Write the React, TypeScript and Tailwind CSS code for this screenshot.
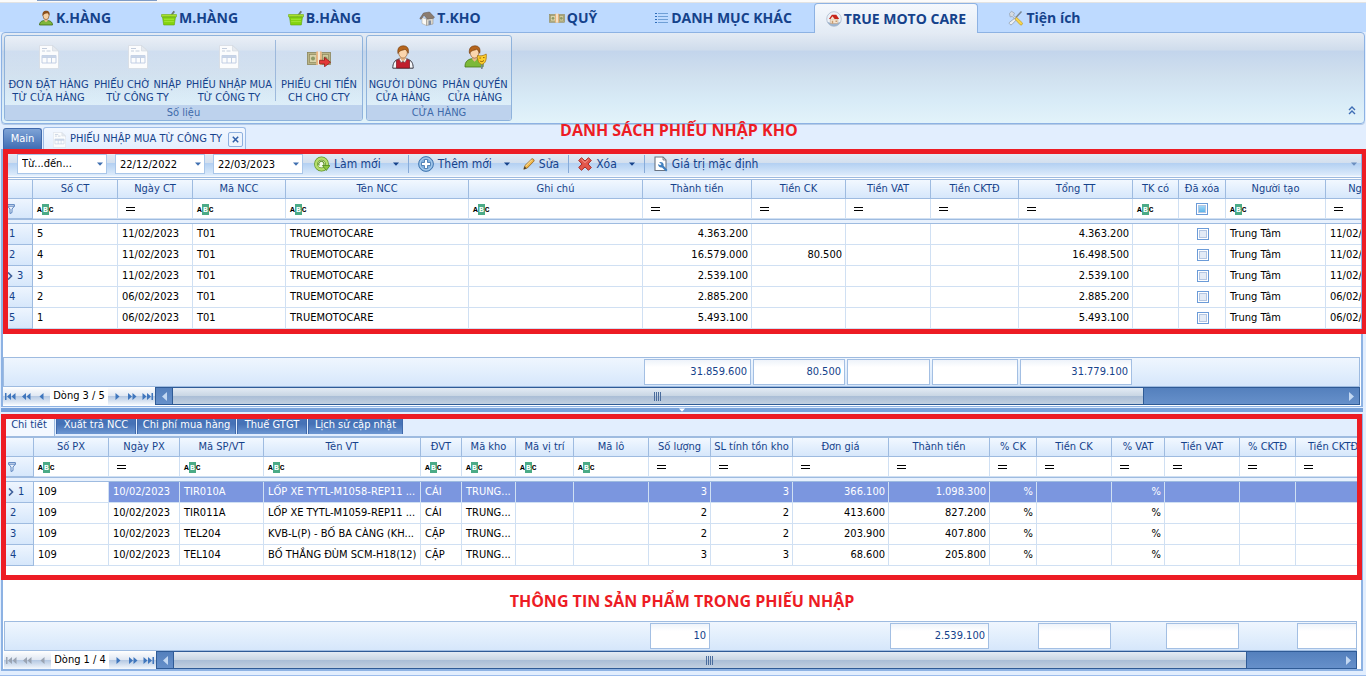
import type { ReactNode } from "react";

/* ---------- icons ---------- */

function PersonIcon({ className, shirt }: { className: string; shirt: string }) {
  return (
    <svg viewBox="0 0 16 16" className={className} aria-hidden="true">
      <path d="M1.500 15c0-3.200 2.400-4.600 6.500-4.600s6.500 1.400 6.500 4.600z" fill={shirt} stroke="#3f6b12" strokeWidth=".8" />
      <path d="M6.300 8.500h3.400v2.200L8 12.300l-1.700-1.600z" fill="#e9b98a" />
      <ellipse cx="8" cy="5.600" rx="3" ry="4" fill="#f6d0a4" stroke="#7a4a1c" strokeWidth=".6" />
      <path d="M4.600 6C4 2.400 5.600.8 8.200.8s4 1.600 3.300 5c-.5-1.400-1.300-2.300-2.300-2.500C7.800 3.900 5.400 3.700 4.600 6z" fill="#8a4f1d" />
    </svg>
  );
}

function BasketIcon() {
  return (
    <svg viewBox="0 0 16 16" className="size-4" aria-hidden="true">
      <path d="M9 6.500L13 1.200M11 4.500l2.500-3" stroke="#6c7a70" strokeWidth="1.200" fill="none" />
      <path d="M.5 4.500h15v2.300H.5z" fill="#a9e02c" stroke="#6fae14" strokeWidth=".6" />
      <path d="M1.500 7h13l-1.200 8H2.700z" fill="#84d30f" stroke="#62a50c" strokeWidth=".6" />
      <path d="M3 9.300h10M3.200 11.600h9.600" stroke="#a6e63a" strokeWidth=".9" />
    </svg>
  );
}

function HouseIcon() {
  return (
    <svg viewBox="0 0 16 16" className="size-4" aria-hidden="true">
      <path d="M3 7.500v6l4.500 2V9z" fill="#fbfaf6" stroke="#a39c8f" strokeWidth=".5" />
      <path d="M7.500 9l6.500-1v6l-6.500 1.500z" fill="#ddd8cd" stroke="#8c8578" strokeWidth=".5" />
      <path d="M.8 8.500L4.500 3l6-1 5 5.300-1 .9-6.200.9L5 5.200 2 9.300z" fill="#8b7c70" stroke="#5d5148" strokeWidth=".5" />
      <path d="M9.500 10.500H12v4.300l-2.500.5z" fill="#7f8ca0" />
    </svg>
  );
}

function MoneyIcon({ className, arrow }: { className: string; arrow?: boolean }) {
  return (
    <svg viewBox="0 0 24 18" className={className} aria-hidden="true">
      <rect x=".5" y="3.500" width="23" height="12" fill="#b9b487" stroke="#8b865c" strokeWidth=".8" />
      <rect x="2.500" y="5.500" width="7" height="8" fill="#d8d3ab" stroke="#8f895d" strokeWidth=".7" />
      <rect x="15.500" y="5.500" width="6" height="8" fill="#cfca9d" stroke="#8f895d" strokeWidth=".7" />
      <circle cx="6" cy="9.500" r="2" fill="#8e9a68" />
      <circle cx="18.500" cy="9.500" r="2" fill="#8e9a68" />
      <path d="M9.500 2.500h5v13.500h-5z" fill="#f4ead8" />
      <path d="M9.500 2.500h1.200V16H9.500zM13.300 2.500h1.200V16h-1.200z" fill="#e9a15f" />
      {arrow && <path d="M12.500 11.300h5v-3l6 5-6 4.500v-3h-5z" fill="#e33838" stroke="#8f1414" strokeWidth=".7" />}
    </svg>
  );
}

function ListIcon() {
  return (
    <svg viewBox="0 0 14 12" className="h-3 w-3.5" aria-hidden="true">
      <path d="M0 1.500h2M0 4.500h2M0 7.500h2M0 10.500h2" stroke="#2f6cb8" />
      <path d="M3 1.500h10M3 4.500h10M3 7.500h10M3 10.500h10" stroke="#6f9fd6" />
    </svg>
  );
}

function CareIcon() {
  return (
    <svg viewBox="0 0 16 16" className="size-4" aria-hidden="true">
      <circle cx="8" cy="8" r="7.300" fill="#edf2f8" stroke="#b3c1d2" strokeWidth=".9" />
      <path d="M1.300 10.500c2.500 2 10.900 2 13.400 0-1 3-3.500 4.700-6.700 4.700s-5.700-1.700-6.700-4.700z" fill="#9db4ce" />
      <path d="M4.300 8h7.600v4.500H4.300z" fill="#f3e3cf" stroke="#b58d6a" strokeWidth=".4" />
      <path d="M2.900 8l3-4.300h4.400L13.200 8z" fill="#c62419" />
      <path d="M4.300 8.300l2.200-3 2.300 3z" fill="#f3e3cf" />
      <path d="M9.500 9.500H11V11H9.500zM5.800 9.700h1.400v2.800H5.800z" fill="#c79b6f" />
    </svg>
  );
}

function ToolsIcon() {
  return (
    <svg viewBox="0 0 16 16" className="size-4" aria-hidden="true">
      <path d="M13.500 1.500L6 9.500" stroke="#7a8794" strokeWidth="1.500" />
      <path d="M7 8l1.600 1.600-4.800 5c-1 .9-3.400-1-2.400-2.200z" fill="#eef1f5" stroke="#8693a3" strokeWidth=".7" />
      <path d="M1.500 3.500l2-2.300 3 2-1 2 3 3-1 1.300-3.300-3-2 .4z" fill="#d4dae1" stroke="#8b95a1" strokeWidth=".6" />
      <path d="M8.500 7.300l5.800 5.500c.9 1.200-.9 3-2.100 2L7 9.200z" fill="#f7d54c" stroke="#b8901c" strokeWidth=".6" />
    </svg>
  );
}

function DocIcon({ className }: { className: string }) {
  return (
    <svg viewBox="0 0 20 24" className={className} aria-hidden="true">
      <path d="M.5.500h13l6 5.500v17.500H.5z" fill="#fbfcfd" stroke="#d5dae2" strokeWidth=".8" />
      <path d="M13.500.500V6h6z" fill="#e6eaf0" stroke="#d0d6df" strokeWidth=".6" />
      <path d="M3 3.500h5M3 6h3M7.500 6h4" stroke="#c3cddd" strokeWidth="1.200" />
      <path d="M3 10.500h14V18H3zM3 12.500h14M8 10.500V18M12.500 10.500V18" fill="none" stroke="#bccbe2" strokeWidth=".9" />
      <path d="M3 10.500h14v2H3z" fill="#c9d5e8" />
    </svg>
  );
}

function UserRedIcon() {
  return (
    <svg viewBox="0 0 22 24" className="h-6 w-[22px]" aria-hidden="true">
      <path d="M.8 23.200c0-5 1.700-8 6-9.200h8.400c4.300 1.200 6 4.200 6 9.200z" fill="#f5f6f8" stroke="#3b3b45" strokeWidth="1" />
      <path d="M4.500 23v-7.500l4-1.500 2.500 3.500 2.500-3.500 4 1.500V23z" fill="#c01f2e" stroke="#7c0f1a" strokeWidth=".7" />
      <path d="M7 13.500l1.500-.5 2.500 3.500 2.500-3.500 1.500.5-2 4-2-1.500-2 1.500z" fill="#fff" stroke="#555" strokeWidth=".5" />
      <path d="M8.500 11.500h5v2.500L11 16.500 8.500 14z" fill="#eab98b" />
      <ellipse cx="11" cy="7.800" rx="4.300" ry="5.300" fill="#fbd5ac" stroke="#8a4f1d" strokeWidth=".6" />
      <path d="M6 8.500C5 3.500 7.300.8 11.300.8c4 0 6 2.800 4.900 7.500-.7-2-1.700-3.300-3.200-4C11 5.500 7.300 5 6 8.500z" fill="#b5651d" stroke="#6e3809" strokeWidth=".6" />
    </svg>
  );
}

function UserMaskIcon() {
  return (
    <svg viewBox="0 0 23 24" className="h-6 w-[23px]" aria-hidden="true">
      <path d="M1 22c-.3-5.500 3-8.500 9.500-8.500S20 16.500 19 22z" fill="#7cb938" stroke="#47761a" strokeWidth=".8" />
      <path d="M8.300 11.500h4.500v3l-2.200 2.200-2.300-2.200z" fill="#eab98b" />
      <ellipse cx="10.500" cy="7.800" rx="4.200" ry="5.300" fill="#fbd5ac" stroke="#8a4f1d" strokeWidth=".6" />
      <path d="M5.500 8.500C4.500 3.500 7 .8 11 .8c4 0 5.800 2.800 4.700 7.500-.7-2-1.500-3.300-3-4C10.500 5.500 7 5 5.500 8.500z" fill="#b5651d" stroke="#6e3809" strokeWidth=".6" />
      <path d="M13.500 10.500c3 .8 6 .3 8.700-1.500.5 5.500-.7 9.500-4.400 10.500-3-1-4.300-4.200-4.300-9z" fill="#ffd02e" stroke="#a9760c" strokeWidth=".8" />
      <path d="M15.300 13h1.800M19 12.600h1.600M15.800 15.800c1.300 1.300 2.800 1.100 4.200-.4" stroke="#8a5a06" strokeWidth=".9" fill="none" />
      <path d="M17.800 19.500V24" stroke="#7b8794" strokeWidth="1.600" />
    </svg>
  );
}

function RefreshIcon() {
  return (
    <svg viewBox="0 0 16 16" className="size-4" aria-hidden="true">
      <circle cx="7.500" cy="8" r="5.500" fill="#f4faea" stroke="#5f9427" strokeWidth="3.800" />
      <circle cx="7.500" cy="8" r="5.500" fill="none" stroke="#b5dd6c" strokeWidth="2.400" />
      <path d="M5.300 9.500A2.600 2.600 0 1 1 9 10" fill="none" stroke="#5f9427" strokeWidth="1.100" />
      <path d="M8.500 9.500H16l-3.700 5z" fill="#8cc63f" stroke="#4f8a1e" strokeWidth=".8" />
    </svg>
  );
}

function AddIcon() {
  return (
    <svg viewBox="0 0 16 16" className="size-4" aria-hidden="true">
      <circle cx="8" cy="8" r="7.400" fill="#7fafdd" stroke="#4377b0" strokeWidth="1" />
      <circle cx="8" cy="8" r="6" fill="none" stroke="#b9d5f0" strokeWidth=".8" />
      <path d="M6.500 3.500h3v3h3v3h-3v3h-3v-3h-3v-3h3z" fill="#fff" stroke="#3a6ea8" strokeWidth=".8" />
    </svg>
  );
}

function PencilIcon() {
  return (
    <svg viewBox="0 0 12 12" className="size-3" aria-hidden="true">
      <path d="M.8 11.200L2 7.500 8.800.9c1-.7 2.900 1.100 2.200 2.200L4.300 10z" fill="#f2b84b" stroke="#8a5a16" strokeWidth=".8" />
      <path d="M2.500 8.200l6.300-6.400" stroke="#fde6a8" strokeWidth="1" />
      <path d="M.8 11.200l.9-2.600 1.700 1.700z" fill="#333" />
    </svg>
  );
}

function DeleteIcon() {
  return (
    <svg viewBox="0 0 14 14" className="size-3.5" aria-hidden="true">
      <path d="M3.500.7L7 4 10.500.7l2.800 2.800L10 7l3.300 3.500-2.800 2.800L7 10l-3.500 3.300L.7 10.500 4 7 .7 3.500z" fill="#e2574c" stroke="#a32018" strokeWidth=".9" />
      <path d="M3.500 2.300L7 5.600l3.500-3.300" stroke="#f5a49c" strokeWidth=".9" fill="none" />
    </svg>
  );
}

function DefaultsIcon() {
  return (
    <svg viewBox="0 0 14 16" className="h-4 w-3.5" aria-hidden="true">
      <path d="M1 1h8l3 3v10.500H1z" fill="#fff" stroke="#6a7482" strokeWidth="1.100" />
      <path d="M9 1v3h3z" fill="#d5dae2" stroke="#6a7482" strokeWidth=".8" />
      <path d="M5 6.500a3 3 0 0 1 4.600 3.300L13.500 14l-1.400 1.500L8 11.400A3 3 0 0 1 4.200 8l2 1.300 1.400-1.200z" fill="#3f7fbf" />
    </svg>
  );
}

function DownArrow({ className }: { className: string }) {
  return (
    <svg viewBox="0 0 6 4" className={className} aria-hidden="true">
      <path d="M0 .5h6L3 3.700z" fill="currentColor" />
    </svg>
  );
}

function FunnelIcon() {
  return (
    <svg viewBox="0 0 8 10" className="h-2.5 w-2" aria-hidden="true">
      <path d="M.6.600h6.800v1.600L5 5v3.600L3 9.500V5L.6 2.200zM.6 2.200h6.800" fill="#eaf2fc" stroke="#4d78b8" strokeWidth=".9" />
    </svg>
  );
}

type NavKind = "first" | "prevPage" | "prev" | "next" | "nextPage" | "last";

const navPaths: Record<NavKind, string> = {
  first: "M0 1h1.500v7H0zM6 1v7L2 4.500zM10.500 1v7l-4-3.500z",
  prevPage: "M5 1v7L1 4.500zM9.500 1v7l-4-3.500z",
  prev: "M7.500 1v7l-4-3.500z",
  next: "M4.500 1v7l4-3.500z",
  nextPage: "M2 1v7l4-3.500zM6.500 1v7l4-3.500z",
  last: "M.5 1v7l4-3.500zM5 1v7l4-3.500zM9.500 1H11v7H9.500z",
};

function NavIcon({ kind }: { kind: NavKind }) {
  return (
    <svg viewBox="0 0 11 9" className="h-[9px] w-[11px]" aria-hidden="true">
      <path d={navPaths[kind]} fill="currentColor" />
    </svg>
  );
}

/* ---------- ribbon ---------- */

type Tab = { label: string; width: string; icon: ReactNode; active?: boolean };

const tabs: Tab[] = [
  { label: "K.HÀNG", width: "w-[125px]", icon: <PersonIcon className="size-4" shirt="#7fb63a" /> },
  { label: "M.HÀNG", width: "w-[125px]", icon: <BasketIcon /> },
  { label: "B.HÀNG", width: "w-[125px]", icon: <BasketIcon /> },
  { label: "T.KHO", width: "w-[126px]", icon: <HouseIcon /> },
  { label: "QUỸ", width: "w-[120px]", icon: <MoneyIcon className="h-3 w-4" /> },
  { label: "DANH MỤC KHÁC", width: "w-[181px]", icon: <ListIcon /> },
  { label: "TRUE MOTO CARE", width: "w-[164px]", icon: <CareIcon />, active: true },
  { label: "Tiện ích", width: "w-[133px]", icon: <ToolsIcon /> },
];

function RibbonTabs() {
  return (
    <nav className="flex h-[29px] items-stretch bg-[#bedaff] pl-3">
      {tabs.map((t) => (
        <button
          key={t.label}
          type="button"
          className={`flex ${t.width} shrink-0 items-center justify-center gap-0.5 whitespace-nowrap font-['Open_Sans',sans-serif] text-sm font-bold text-[#15428b] ${
            t.active ? "z-10 -mb-px rounded-t border border-b-0 border-[#8db2e3] bg-gradient-to-b from-[#f4f8fd] to-[#e3ebf5]" : ""
          }`}
        >
          {t.icon}
          {t.label}
        </button>
      ))}
    </nav>
  );
}

function RibbonButton({ lines, width, children }: { lines: [string, string]; width: string; children: ReactNode }) {
  return (
    <button type="button" className={`flex ${width} flex-col items-center pt-[9px] text-center`}>
      <span className="flex h-[33px] items-start justify-center">{children}</span>
      <span className="whitespace-nowrap leading-[13px] text-[#15428b]">
        {lines[0]}
        <br />
        {lines[1]}
      </span>
    </button>
  );
}

function RibbonGroup({ title, children }: { title: string; children: ReactNode }) {
  return (
    <div className="flex flex-col overflow-hidden rounded-[3px] border border-[#8fb3dc] bg-gradient-to-b from-white/30 via-white/5 to-white/10">
      <div className="flex flex-1">{children}</div>
      <div className="h-[15px] bg-[#bdd2ed] text-center leading-4 text-[#3e6aaa]">{title}</div>
    </div>
  );
}

function Ribbon() {
  return (
    <div className="flex h-[92px] gap-[3px] rounded-[4px] border border-[#8db2e3] bg-[linear-gradient(#e4ebf4_0%,#cfdcec_19%,#c3d5ec_20%,#cfdfee_45%,#d8ebf7_75%,#e2f3fa_100%)] p-[2px] shadow-[0_1px_0_#b5cbe6]">
      <RibbonGroup title="Số liệu">
        <RibbonButton lines={["ĐƠN ĐẶT HÀNG", "TỪ CỬA HÀNG"]} width="w-[87px]">
          <DocIcon className="h-6 w-5" />
        </RibbonButton>
        <RibbonButton lines={["PHIẾU CHỜ NHẬP", "TỪ CÔNG TY"]} width="w-[91px]">
          <DocIcon className="h-6 w-5" />
        </RibbonButton>
        <RibbonButton lines={["PHIẾU NHẬP MUA", "TỪ CÔNG TY"]} width="w-[92px]">
          <DocIcon className="h-6 w-5" />
        </RibbonButton>
        <span className="my-1 w-px bg-[#9db9dc]" />
        <RibbonButton lines={["PHIẾU CHI TIỀN", "CH CHO CTY"]} width="w-[86px]">
          <MoneyIcon className="mt-1 h-[18px] w-6" arrow />
        </RibbonButton>
      </RibbonGroup>
      <RibbonGroup title="CỬA HÀNG">
        <RibbonButton lines={["NGƯỜI DÙNG", "CỬA HÀNG"]} width="w-[72px]">
          <UserRedIcon />
        </RibbonButton>
        <RibbonButton lines={["PHÂN QUYỀN", "CỬA HÀNG"]} width="w-[72px]">
          <UserMaskIcon />
        </RibbonButton>
      </RibbonGroup>
      <button type="button" aria-label="Thu gọn" className="mb-1.5 ml-auto mr-1.5 self-end text-[#3e6db5]">
        <svg viewBox="0 0 8 9" className="h-[9px] w-2" aria-hidden="true">
          <path d="M1 4l3-3 3 3M1 8l3-3 3 3" fill="none" stroke="currentColor" strokeWidth="1.400" />
        </svg>
      </button>
    </div>
  );
}

function DocumentTabs() {
  return (
    <div className="flex h-[25px] items-end gap-px pl-[3px]">
      <button type="button" className="h-[21px] w-[39px] rounded-t-[3px] border border-b-0 border-[#3f69ac] bg-gradient-to-b from-[#7ea3d6] to-[#3f6cb3] text-white">
        Main
      </button>
      <div className="flex h-[22px] items-center rounded-t-[3px] border border-b-0 border-[#9dbce6] bg-gradient-to-b from-[#f3f8ff] to-[#e2eefe] pl-[9px] pr-0.5 pt-0.5 text-[#15428b]">
        <DocIcon className="h-4 w-[13px]" />
        <button type="button" className="ml-1 mr-1.5 whitespace-nowrap">
          PHIẾU NHẬP MUA TỪ CÔNG TY
        </button>
        <button type="button" aria-label="Đóng" className="flex size-[15px] items-center justify-center rounded-[2px] border border-[#8fb0de] bg-[#edf4fd]">
          <svg viewBox="0 0 7 7" className="size-[7px]" aria-hidden="true">
            <path d="M.8.800l5.400 5.400M6.200.8L.8 6.200" stroke="#2f5ea8" strokeWidth="1.500" />
          </svg>
        </button>
      </div>
    </div>
  );
}

/* ---------- toolbar ---------- */

const fieldBox = "h-5 w-[90px] border border-[#a9c6e9] bg-white pl-1 text-[11px] text-black outline-none";

function DateField({ label, value }: { label: string; value: string }) {
  return (
    <div className="relative flex">
      <input type="text" aria-label={label} defaultValue={value} className={fieldBox} />
      <button type="button" aria-label={`Chọn ${label}`} className="absolute inset-y-0 right-1 text-[#3f6fb0]">
        <DownArrow className="h-1 w-1.5" />
      </button>
    </div>
  );
}

function ToolButton({ icon, label, menu }: { icon: ReactNode; label: string; menu?: boolean }) {
  return (
    <button type="button" className="flex items-center gap-1 whitespace-nowrap text-xs text-[#15428b]">
      {icon}
      {label}
      {menu && <DownArrow className="ml-2 h-1 w-1.5" />}
    </button>
  );
}

function Toolbar() {
  const rule = <span className="h-[18px] w-px bg-[#86aad8]" />;
  return (
    <div className="flex h-[29px] items-center border-b border-[#9ebbe0] bg-[linear-gradient(#e9f0f8_0%,#d3dfee_50%,#b3d0f2_51%,#dcebfb_94%,#f5f9fe_96%)] pl-3.5 pt-0.5">
      <div className="flex gap-2">
        <div className="relative flex">
          <select aria-label="Khoảng thời gian" className={`${fieldBox} appearance-none`}>
            <option>Từ...đến...</option>
          </select>
          <DownArrow className="pointer-events-none absolute right-1 top-2 h-1 w-1.5 text-[#3f6fb0]" />
        </div>
        <DateField label="Từ ngày" value="22/12/2022" />
        <DateField label="Đến ngày" value="22/03/2023" />
      </div>
      <div className="ml-[11px] flex items-center gap-[9px]">
        <ToolButton icon={<RefreshIcon />} label="Làm mới" menu />
        {rule}
        <ToolButton icon={<AddIcon />} label="Thêm mới" menu />
        <span className="ml-1 flex">
          <ToolButton icon={<PencilIcon />} label="Sửa" />
        </span>
        {rule}
        <ToolButton icon={<DeleteIcon />} label="Xóa" menu />
        {rule}
        <ToolButton icon={<DefaultsIcon />} label="Giá trị mặc định" />
      </div>
      <DownArrow className="ml-auto mr-1 h-1 w-1.5 text-[#6b8fc0]" />
    </div>
  );
}

/* ---------- data grid ---------- */

type Column = {
  name: string;
  width: number;
  filter: "abc" | "eq" | "check";
  align?: "right" | "check";
  sum?: string;
};

const receiptColumns: Column[] = [
  { name: "Số CT", width: 85, filter: "abc" },
  { name: "Ngày CT", width: 75, filter: "eq" },
  { name: "Mã NCC", width: 93, filter: "abc" },
  { name: "Tên NCC", width: 183, filter: "abc" },
  { name: "Ghi chú", width: 174, filter: "abc" },
  { name: "Thành tiền", width: 109, filter: "eq", align: "right", sum: "31.859.600" },
  { name: "Tiền CK", width: 94, filter: "eq", align: "right", sum: "80.500" },
  { name: "Tiền VAT", width: 85, filter: "eq", align: "right", sum: "" },
  { name: "Tiền CKTĐ", width: 88, filter: "eq", align: "right", sum: "" },
  { name: "Tổng TT", width: 114, filter: "eq", align: "right", sum: "31.779.100" },
  { name: "TK có", width: 46, filter: "abc" },
  { name: "Đã xóa", width: 47, filter: "check", align: "check" },
  { name: "Người tạo", width: 100, filter: "abc" },
  { name: "Ngày tạo", width: 90, filter: "eq" },
];

const receiptRows: string[][] = [
  ["5", "11/02/2023", "T01", "TRUEMOTOCARE", "", "4.363.200", "", "", "", "4.363.200", "", "", "Trung Tâm", "11/02/2023"],
  ["4", "11/02/2023", "T01", "TRUEMOTOCARE", "", "16.579.000", "80.500", "", "", "16.498.500", "", "", "Trung Tâm", "11/02/2023"],
  ["3", "11/02/2023", "T01", "TRUEMOTOCARE", "", "2.539.100", "", "", "", "2.539.100", "", "", "Trung Tâm", "11/02/2023"],
  ["2", "06/02/2023", "T01", "TRUEMOTOCARE", "", "2.885.200", "", "", "", "2.885.200", "", "", "Trung Tâm", "06/02/2023"],
  ["1", "06/02/2023", "T01", "TRUEMOTOCARE", "", "5.493.100", "", "", "", "5.493.100", "", "", "Trung Tâm", "06/02/2023"],
];

const itemColumns: Column[] = [
  { name: "Số PX", width: 75, filter: "abc" },
  { name: "Ngày PX", width: 71, filter: "eq" },
  { name: "Mã SP/VT", width: 84, filter: "abc" },
  { name: "Tên VT", width: 157, filter: "abc" },
  { name: "ĐVT", width: 41, filter: "abc" },
  { name: "Mã kho", width: 54, filter: "abc" },
  { name: "Mã vị trí", width: 58, filter: "abc" },
  { name: "Mã lô", width: 75, filter: "abc" },
  { name: "Số lượng", width: 62, filter: "eq", align: "right", sum: "10" },
  { name: "SL tính tồn kho", width: 82, filter: "eq", align: "right" },
  { name: "Đơn giá", width: 96, filter: "eq", align: "right" },
  { name: "Thành tiền", width: 101, filter: "eq", align: "right", sum: "2.539.100" },
  { name: "% CK", width: 47, filter: "eq", align: "right" },
  { name: "Tiền CK", width: 75, filter: "eq", align: "right", sum: "" },
  { name: "% VAT", width: 53, filter: "eq", align: "right" },
  { name: "Tiền VAT", width: 75, filter: "eq", align: "right", sum: "" },
  { name: "% CKTĐ", width: 56, filter: "eq", align: "right" },
  { name: "Tiền CKTĐ", width: 75, filter: "eq", align: "right", sum: "" },
];

const itemRows: string[][] = [
  ["109", "10/02/2023", "TIR010A", "LỐP XE TYTL-M1058-REP11 ...", "CÁI", "TRUNG...", "", "", "3", "3", "366.100", "1.098.300", "%", "", "%", "", "", ""],
  ["109", "10/02/2023", "TIR011A", "LỐP XE TYTL-M1059-REP11 ...", "CÁI", "TRUNG...", "", "", "2", "2", "413.600", "827.200", "%", "", "%", "", "", ""],
  ["109", "10/02/2023", "TEL204", "KVB-L(P) - BỐ BA CÀNG (KH...", "CẶP", "TRUNG...", "", "", "2", "2", "203.900", "407.800", "%", "", "%", "", "", ""],
  ["109", "10/02/2023", "TEL104", "BỐ THẮNG ĐÙM SCM-H18(12)", "CẶP", "TRUNG...", "", "", "3", "3", "68.600", "205.800", "%", "", "%", "", "", ""],
];

const boxBase =
  "block size-3 appearance-none border border-[#6b9bd8] shadow-[inset_0_0_0_1px_#fff,inset_0_0_0_2px_#b4c6e2]";

function FilterCell({ column }: { column: Column }) {
  if (column.filter === "check") {
    return (
      <div className="flex justify-center">
        <input type="checkbox" aria-label={`Lọc ${column.name}`} className={`${boxBase} bg-gradient-to-b from-[#b5e2fa] to-[#3fa9e5]`} />
      </div>
    );
  }
  return (
    <div className="flex items-center pl-1 pt-px">
      <button type="button" aria-label={`Kiểu lọc ${column.name}`} className="flex shrink-0 items-center font-['Liberation_Mono',monospace] text-[8px] font-bold leading-[11px] text-black">
        {column.filter === "abc" ? (
          <>
            <span>A</span>
            <span className="w-[7px] bg-[#4bab87] text-center text-white">B</span>
            <span>C</span>
          </>
        ) : (
          <span className="ml-1 block h-1 w-[9px] border-y border-black" />
        )}
      </button>
      <input type="text" aria-label={`Lọc ${column.name}`} className="h-3 w-full min-w-0 bg-transparent outline-none" />
    </div>
  );
}

type GridProps = { columns: Column[]; rows: string[][]; current: number; highlight?: boolean };

function DataGrid({ columns, rows, current, highlight }: GridProps) {
  const total = columns.reduce((sum, c) => sum + c.width, 30);
  const rowHead = "border-b border-r border-[#9ebbe0] bg-gradient-to-b from-[#eef5fe] to-[#d6e7fb] text-left font-normal text-[#15428b]";
  return (
    <div className="overflow-hidden bg-white">
      <table className="table-fixed border-separate border-spacing-0" style={{ width: total }}>
        <colgroup>
          <col className="w-[30px]" />
          {columns.map((c) => (
            <col key={c.name} style={{ width: c.width }} />
          ))}
        </colgroup>
        <thead>
          <tr className="h-5">
            <th className="border-y border-r border-[#9ebbe0] bg-gradient-to-b from-[#f2f8ff] to-[#d6e7fb] p-0" />
            {columns.map((c) => (
              <th
                key={c.name}
                scope="col"
                className="overflow-hidden whitespace-nowrap border-y border-r border-[#9ebbe0] bg-gradient-to-b from-[#f2f8ff] to-[#d6e7fb] p-0 text-center font-normal leading-[18px] text-[#15428b]"
              >
                {c.name}
              </th>
            ))}
          </tr>
          <tr className="h-5">
            <td className={`${rowHead} p-0 pl-1`}>
              <FunnelIcon />
            </td>
            {columns.map((c) => (
              <td key={c.name} className="border-b border-r border-[#d0e0f3] p-0">
                <FilterCell column={c} />
              </td>
            ))}
          </tr>
          <tr className="h-[5px]">
            <td colSpan={columns.length + 1} className="border-y border-[#9ebbe0] bg-[#e8f1fd] p-0" />
          </tr>
        </thead>
        <tbody>
          {rows.map((row, r) => (
            <tr key={r} className="h-[21px]">
              <th scope="row" className={`${rowHead} p-0 ${r === current ? "pl-1" : "pl-1.5"}`}>
                <span className="flex items-center">
                  {r === current && (
                    <svg viewBox="0 0 6 8" className="mr-1 h-2 w-1.5" aria-hidden="true">
                      <path d="M1 .5L4.500 4 1 7.500" fill="none" stroke="#3d5f9a" strokeWidth="1.600" />
                    </svg>
                  )}
                  {r + 1}
                </span>
              </th>
              {row.map((value, i) => {
                const column = columns[i];
                const selected = highlight && r === current && i > 0;
                return (
                  <td
                    key={column.name}
                    className={`overflow-hidden whitespace-nowrap border-b border-r border-[#d0e0f3] py-0 pl-1 pr-[3px] leading-5 ${
                      column.align === "right" ? "text-right" : ""
                    } ${selected ? "bg-[#7b96df] text-white" : "text-black"}`}
                  >
                    {column.align === "check" ? (
                      <span className="flex justify-center">
                        <input type="checkbox" aria-label={`${column.name} ${r + 1}`} className={`${boxBase} bg-[#e3ebf6]`} />
                      </span>
                    ) : (
                      value
                    )}
                  </td>
                );
              })}
            </tr>
          ))}
        </tbody>
      </table>
    </div>
  );
}

function SummaryBar({ columns }: { columns: Column[] }) {
  return (
    <div className="flex h-[30px] overflow-hidden border border-[#9ebbe0] bg-gradient-to-b from-[#eff6fe] to-[#d6e7fb] py-px pl-[29px] text-[#15428b]">
      {columns.map((c) => (
        <div key={c.name} className="flex shrink-0 px-px" style={{ width: c.width }}>
          {c.sum !== undefined && (
            <output className="flex-1 border border-[#a3bfe3] bg-gradient-to-b from-[#eef3fa] to-white to-30% pr-[3px] text-right leading-6">
              {c.sum}
            </output>
          )}
        </div>
      ))}
    </div>
  );
}

function NavButton({ kind, label, off }: { kind: NavKind; label: string; off?: boolean }) {
  return (
    <button type="button" aria-label={label} className={`flex w-4 items-center justify-center ${off ? "text-[#9aa4b3]" : "text-[#3f76bd]"}`}>
      <NavIcon kind={kind} />
    </button>
  );
}

function Navigator({ label, thumb, atStart }: { label: string; thumb: number; atStart?: boolean }) {
  return (
    <div className="flex h-[18px]">
      <div className="flex w-[152px] shrink-0 justify-between bg-[linear-gradient(#fff_0%,#dfe7f2_50%,#b4c8e2_51%,#f4f8fd_100%)]">
        <NavButton kind="first" label="Đầu" off={atStart} />
        <NavButton kind="prevPage" label="Trang trước" off={atStart} />
        <NavButton kind="prev" label="Trước" off={atStart} />
        <span className="w-[60px] whitespace-nowrap bg-white text-center leading-[18px] text-black">{label}</span>
        <NavButton kind="next" label="Sau" />
        <NavButton kind="nextPage" label="Trang sau" />
        <NavButton kind="last" label="Cuối" />
      </div>
      <div className="flex flex-1 border border-[#2f5b96] bg-gradient-to-b from-[#5480bd] to-[#6690ca]">
        <button type="button" aria-label="Cuộn trái" className="flex w-4 shrink-0 items-center justify-center text-[#c3d8f2]">
          <svg viewBox="0 0 5 9" className="h-[9px] w-[5px]" aria-hidden="true">
            <path d="M5 0v9L0 4.500z" fill="currentColor" />
          </svg>
        </button>
        <div className="flex-1">
          <div
            className="flex h-full items-center justify-center gap-px border-x border-[#2f5b96] bg-[linear-gradient(#e3ebf4_0%,#c9d6e4_48%,#a9bdd6_50%,#c2d0e0_100%)]"
            style={{ width: `${thumb}%` }}
          >
            {[0, 1, 2, 3].map((n) => (
              <span key={n} className="h-[9px] w-px bg-[#4a6c9c]" />
            ))}
          </div>
        </div>
        <button type="button" aria-label="Cuộn phải" className="flex w-4 shrink-0 items-center justify-center text-[#c3d8f2]">
          <svg viewBox="0 0 5 9" className="h-[9px] w-[5px]" aria-hidden="true">
            <path d="M0 0v9l5-4.500z" fill="currentColor" />
          </svg>
        </button>
      </div>
    </div>
  );
}

const detailTabs = [
  { label: "Xuất trả NCC", width: "w-[80px]" },
  { label: "Chi phí mua hàng", width: "w-[99px]" },
  { label: "Thuế GTGT", width: "w-[70px]" },
  { label: "Lịch sử cập nhật", width: "w-[95px]" },
];

function DetailTabs() {
  return (
    <div className="flex h-[23px] items-start border-b border-[#9ebbe0] bg-[#e2eefe]">
      <button type="button" className="h-[22px] w-[51px] border-r border-[#9ebbe0] bg-[#f3f8ff] text-[#15428b]">
        Chi tiết
      </button>
      <div className="flex h-5 gap-px pl-px">
        {detailTabs.map((t) => (
          <button
            key={t.label}
            type="button"
            className={`${t.width} whitespace-nowrap border-x border-[#3f69ac] bg-gradient-to-b from-[#4a77ba] via-[#4571b6] to-[#6d97d2] pt-0.5 text-white`}
          >
            {t.label}
          </button>
        ))}
      </div>
    </div>
  );
}

const callout = "whitespace-nowrap font-['Open_Sans',sans-serif] text-base font-bold leading-4 text-[#ed1c24]";

export default function App() {
  return (
    <div className="overflow-hidden bg-[#e2eefe] font-['DejaVu_Sans_Condensed','DejaVu_Sans',sans-serif] text-[11px]">
      <div className="h-[3px] border-b border-[#e3e3e3] bg-[#fbfbfb] pl-[37px]">
        <div className="h-px w-[120px] bg-[#7f9cc6]" />
      </div>
      <RibbonTabs />
      <div className="px-px">
        <Ribbon />
      </div>

      <div className="relative">
        <DocumentTabs />
        <h2 className={`absolute left-[41%] -top-0.5 ${callout}`}>DANH SÁCH PHIẾU NHẬP KHO</h2>
      </div>

      <section className="ml-px mr-[3px] border-x-2 border-b border-[#8db2e3] bg-white pb-px">
        <div className="relative pb-[5px]">
          <Toolbar />
          <div className="pt-px">
            <DataGrid columns={receiptColumns} rows={receiptRows} current={2} />
          </div>
          <div className="pointer-events-none absolute inset-y-0 left-0 -right-1.5 border-[5px] border-[#ed1c24]" />
        </div>
        <div className="mr-px pt-[23px]">
          <SummaryBar columns={receiptColumns} />
          <Navigator label="Dòng 3 / 5" thumb={83} />
        </div>
      </section>

      <div className="ml-px mr-[3px] mt-px flex h-1 items-center justify-center bg-[#76a1da] text-white">
        <DownArrow className="h-1 w-1.5" />
      </div>

      <section className="ml-px mr-[3px] mt-0.5 border-x-2 border-b-2 border-[#8db2e3] bg-white">
        <div className="relative pb-3.5">
          <div className="ml-px mr-1">
            <DetailTabs />
            <DataGrid columns={itemColumns} rows={itemRows} current={0} highlight />
          </div>
          <div className="pointer-events-none absolute inset-y-0 -left-0.5 -right-px border-[5px] border-[#ed1c24]" />
        </div>
        <h2 className={`flex h-[41px] items-center justify-center ${callout}`}>THÔNG TIN SẢN PHẨM TRONG PHIẾU NHẬP</h2>
        <div className="ml-px mr-1">
          <SummaryBar columns={itemColumns} />
          <Navigator label="Dòng 1 / 4" thumb={92} atStart />
        </div>
      </section>
      <div className="mt-1 h-0.5 bg-[#9dbdec]" />
    </div>
  );
}
